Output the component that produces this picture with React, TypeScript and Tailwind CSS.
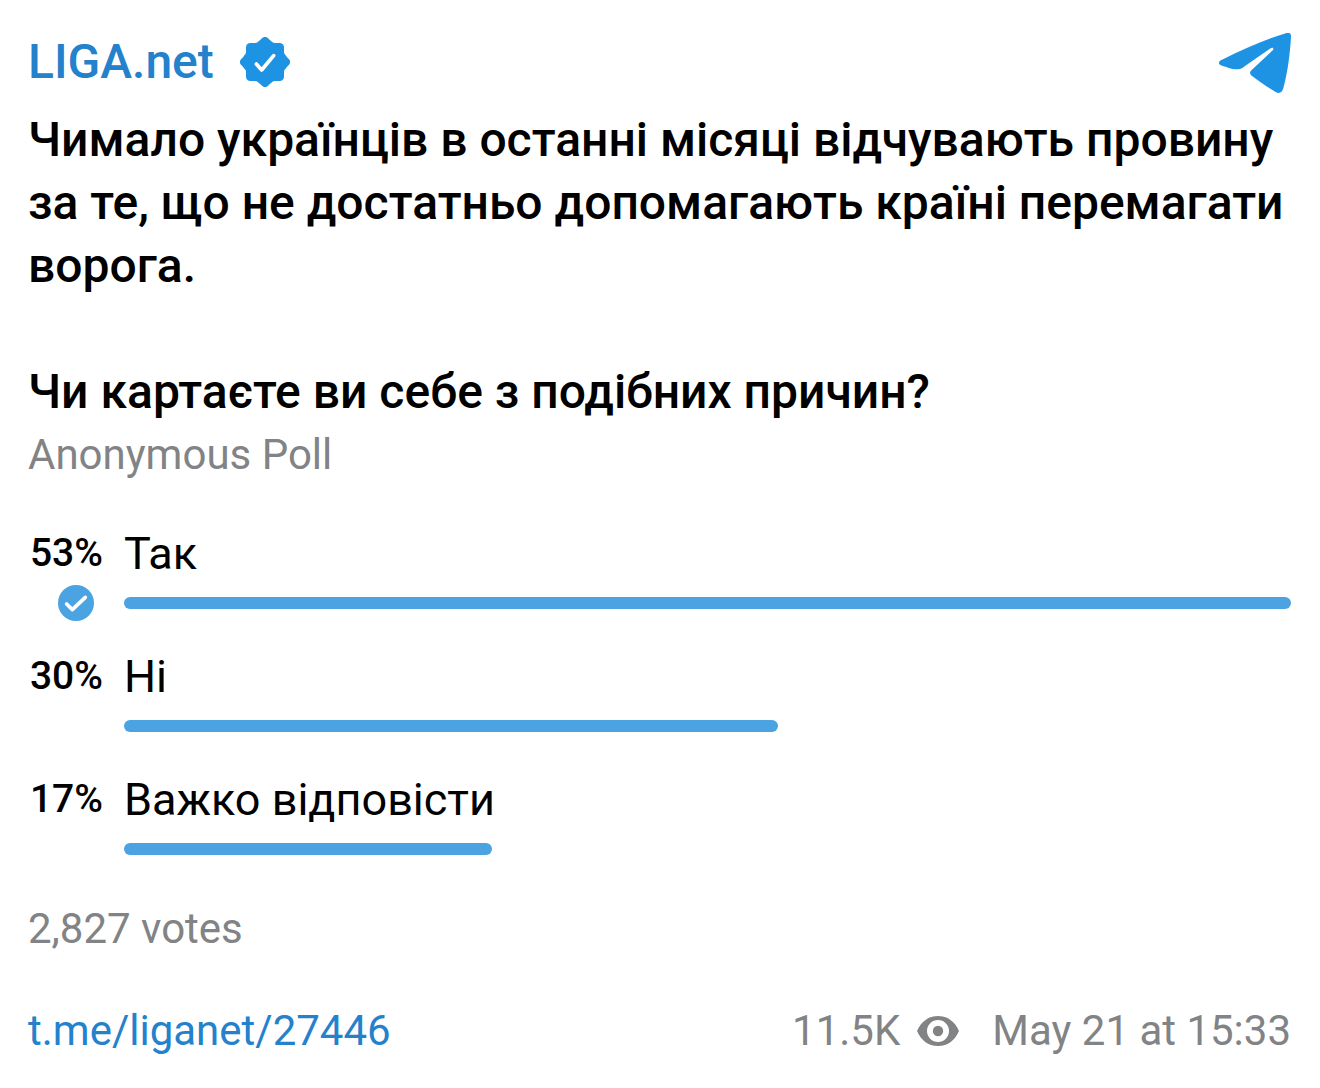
const options = [
  { label: "Так", percent: 53, width: 100, chosen: true },
  { label: "Ні", percent: 30, width: 56, chosen: false },
  { label: "Важко відповісти", percent: 17, width: 31.5, chosen: false },
];

function VerifiedBadge() {
  return (
    <svg viewBox="30 24 150 150" className="size-[50px] shrink-0" role="img" aria-label="Verified">
      <g fill="#1e93e4" stroke="#1e93e4" strokeLinejoin="round">
        <rect x="48" y="42" width="114" height="114" rx="13" stroke="none" />
        <rect x="48" y="42" width="114" height="114" rx="13" stroke="none" transform="rotate(45 105 99)" />
        <path
          stroke="none"
          d="M76 42Q82 42 88 35H122Q128 42 134 42V156Q128 156 122 163H88Q82 156 76 156ZM48 70Q48 76 41 82V116Q48 122 48 128H162Q162 122 169 116V82Q162 76 162 70Z"
        />
      </g>
      <path d="M79 105 L95 123 L131 80" fill="none" stroke="#fff" strokeWidth="11" strokeLinecap="round" strokeLinejoin="round" />
    </svg>
  );
}

function TelegramLogo() {
  return (
    <svg viewBox="87 69 216 180" className="h-[60px] w-[72px]" aria-hidden="true">
      <path
        fill="#1e93e4"
        d="M87 159C87 154 90 151 96 149C160 118 225 89 283 71C297 66 304 69 303 81C300 132 293 188 280 235C276 249 267 252 257 246C232 232 208 214 186 198C179 193 178 187 185 180L249 120C252 115 248 111 242 115L165 168C156 176 149 178 138 178C124 177 110 171 96 167C90 165 87 163 87 159Z"
      />
    </svg>
  );
}

function ChosenMark() {
  return (
    <svg viewBox="144 195 108 108" className="mr-[9px] size-9" role="img" aria-label="Chosen">
      <circle cx="198" cy="249" r="54" fill="#4ba3e2" />
      <path d="M170 252 L187 269 L226 232" fill="none" stroke="#fff" strokeWidth="11" strokeLinecap="round" strokeLinejoin="round" />
    </svg>
  );
}

function EyeIcon() {
  return (
    <svg viewBox="0 0 42 31" className="h-[31px] w-[42px]" role="img" aria-label="views">
      <path
        fill="#818385"
        fillRule="evenodd"
        d="M0 15C4 6 11 0 21 0S38 6 42 15C38 24 31 30 21 30S4 24 0 15ZM21 4A11 11 0 1 0 21 26A11 11 0 1 0 21 4Z"
      />
      <circle cx="21" cy="15" r="5.2" fill="#818385" />
    </svg>
  );
}

export default function App() {
  return (
    <article className="min-h-screen bg-white pt-[30px] pr-[29px] pb-6 pl-7 font-[Roboto,sans-serif] text-black">
      <header className="flex items-end justify-between">
        <div className="flex items-center gap-[26px]">
          <a href="https://t.me/liganet" className="text-[48px] leading-[63px] font-medium text-[#2481cc]">
            LIGA.net
          </a>
          <VerifiedBadge />
        </div>
        <a href="https://t.me/liganet/27446" aria-label="Telegram">
          <TelegramLogo />
        </a>
      </header>

      <h1 className="mt-[15px] text-[48px] leading-[63px] font-medium">
        Чимало українців в останні місяці відчувають провину за те, що не достатньо допомагають країні перемагати ворога.
        <br />
        <br />
        Чи картаєте ви себе з подібних причин?
      </h1>
      <p className="mt-[2px] text-[42px] leading-[60px] text-[#818385]">Anonymous Poll</p>

      <ul className="mt-[37px] flex flex-col gap-6">
        {options.map((option) => (
          <li key={option.label} className="flex gap-[21px]">
            <div className="flex w-[75px] shrink-0 flex-col items-end">
              <span className="text-[39px] leading-[63px] font-medium">{option.percent}%</span>
              {option.chosen && <ChosenMark />}
            </div>
            <div className="min-w-0 flex-1">
              <div className="text-[45px] leading-[63px]">{option.label}</div>
              <div className="flex h-9 items-center">
                <div className="h-3 rounded-full bg-[#4ba3e2]" style={{ width: `${option.width}%` }} />
              </div>
            </div>
          </li>
        ))}
      </ul>

      <p className="mt-8 text-[42px] leading-[60px] text-[#818385]">2,827 votes</p>

      <footer className="mt-[42px] flex items-center justify-between text-[42px] leading-[60px] text-[#818385]">
        <a href="https://t.me/liganet/27446" className="text-[#2481cc]">
          t.me/liganet/27446
        </a>
        <div className="flex items-center">
          <span>11.5K</span>
          <span className="mr-[33px] ml-[17px]">
            <EyeIcon />
          </span>
          <time>May 21 at 15:33</time>
        </div>
      </footer>
    </article>
  );
}
